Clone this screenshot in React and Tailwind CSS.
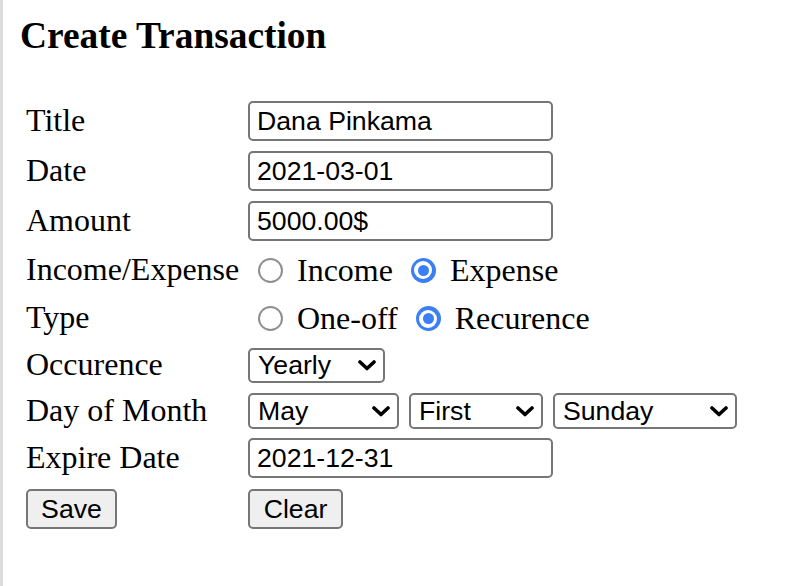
import React from "react";

const serif = { fontFamily: '"Liberation Serif", "Times New Roman", serif' };
const sans = { fontFamily: '"Liberation Sans", Arial, sans-serif' };

function Radio({ checked, ml }) {
  if (checked) {
    return (
      <div className={`${ml} w-[25px] h-[25px] min-w-[25px] rounded-full bg-[#3b7ff5] flex items-center justify-center shrink-0`}>
        <div className="w-[18px] h-[18px] rounded-full bg-white flex items-center justify-center">
          <div className="w-[11px] h-[11px] rounded-full bg-[#3b7ff5]" />
        </div>
      </div>
    );
  }
  return <div className={`${ml} w-[25px] h-[25px] min-w-[25px] rounded-full border-2 border-[#8f8f8f] bg-white shrink-0`} />;
}

function Chevron() {
  return (
    <svg width="18" height="11" viewBox="0 0 18 11" className="shrink-0">
      <polyline points="2,2 9,8.5 16,2" fill="none" stroke="#000" strokeWidth="3.6" strokeLinecap="round" strokeLinejoin="round" />
    </svg>
  );
}

function Select({ value, w }) {
  return (
    <div
      className={`${w} h-full border-2 border-[#767676] rounded-[5px] bg-white flex items-center justify-between pl-[8px] pr-[7px] text-[26.67px] leading-[normal] text-black`}
      style={sans}
    >
      <span>{value}</span>
      <Chevron />
    </div>
  );
}

function TextBox({ value }) {
  return (
    <div
      className="w-[305px] h-[40px] border-2 border-[#767676] rounded-[5px] bg-white flex items-center pl-[7px] text-[26.67px] leading-[normal] text-black"
      style={sans}
    >
      {value}
    </div>
  );
}

function Button({ label, w }) {
  return (
    <div
      className={`${w} h-[40px] border-2 border-[#767676] rounded-[5px] bg-[#efefef] flex items-center justify-center text-[26.67px] leading-[normal] text-black`}
      style={sans}
    >
      {label}
    </div>
  );
}

function Row({ h, label, children }) {
  return (
    <div className={`flex items-center ${h}`}>
      <div className="w-[222px] shrink-0 text-[32px] leading-[normal] text-black -mt-[2px]" style={serif}>
        {label}
      </div>
      <div className="flex items-center h-full">{children}</div>
    </div>
  );
}

export default function App() {
  return (
    <div className="h-[586px] bg-white border-l-[3px] border-[#dcdcdc] pl-[17px] pt-[14px]">
      <h3 className="text-[37.4px] font-bold leading-[normal] text-black" style={serif}>
        Create Transaction
      </h3>
      <div className="mt-[39px] ml-[6px] flex flex-col">
        <Row h="h-[50px]" label="Title">
          <TextBox value="Dana Pinkama" />
        </Row>
        <Row h="h-[50px]" label="Date">
          <TextBox value="2021-03-01" />
        </Row>
        <Row h="h-[50px]" label="Amount">
          <TextBox value="5000.00$" />
        </Row>
        <Row h="h-[48px]" label="Income/Expense">
          <div className="flex items-center text-[32px] leading-[normal] text-black" style={serif}>
            <Radio ml="ml-[10px]" />
            <span className="ml-[14px]">Income</span>
            <Radio checked ml="ml-[18px]" />
            <span className="ml-[14px]">Expense</span>
          </div>
        </Row>
        <Row h="h-[49px]" label="Type">
          <div className="flex items-center text-[32px] leading-[normal] text-black" style={serif}>
            <Radio ml="ml-[10px]" />
            <span className="ml-[14px]">One-off</span>
            <Radio checked ml="ml-[18px]" />
            <span className="ml-[14px]">Recurence</span>
          </div>
        </Row>
        <Row h="h-[45px]" label="Occurence">
          <div className="h-[35px] flex">
            <Select value="Yearly" w="w-[137px]" />
          </div>
        </Row>
        <Row h="h-[46px]" label="Day of Month">
          <div className="h-[36px] flex gap-[10px]">
            <Select value="May" w="w-[151px]" />
            <Select value="First" w="w-[134px]" />
            <Select value="Sunday" w="w-[184px]" />
          </div>
        </Row>
        <Row h="h-[48px]" label="Expire Date">
          <TextBox value="2021-12-31" />
        </Row>
        <div className="flex items-center h-[54px]">
          <div className="w-[222px] shrink-0">
            <Button label="Save" w="w-[91px]" />
          </div>
          <Button label="Clear" w="w-[95px]" />
        </div>
      </div>
    </div>
  );
}
